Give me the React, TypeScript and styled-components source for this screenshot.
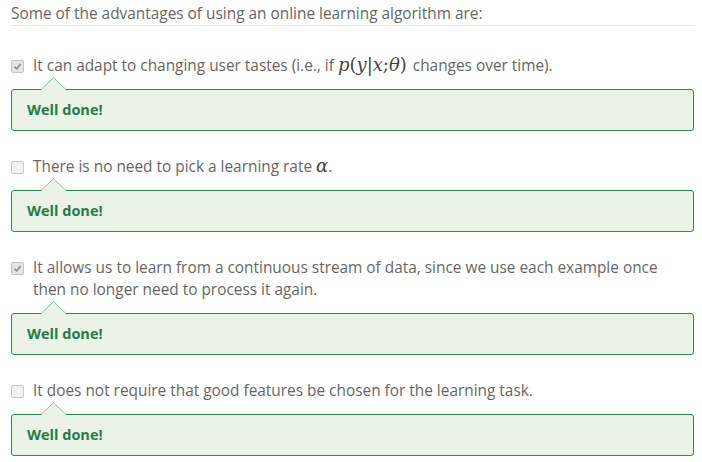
import React from "react";
import styled, { createGlobalStyle } from "styled-components";

const Global = createGlobalStyle`
  html, body { margin: 0; padding: 0; background: #fff; }
  body { font-family: "Open Sans", "Noto Sans", sans-serif; }
`;

const Page = styled.div`
  padding: 3px 8px 0 11px;
  width: 683px;
  color: #666;
  font-size: 15.4px;
  line-height: 22px;
`;

const Prompt = styled.div`
  border-bottom: 1px solid #e6e6e6;
  margin-bottom: 29px;
`;

const List = styled.div`
  display: flex;
  flex-direction: column;
  gap: 25px;
`;

const Item = styled.div`
  display: flex;
  flex-direction: column;
`;

const OptionRow = styled.label`
  display: flex;
  align-items: flex-start;
`;

const Box = styled.span<{ $checked: boolean }>`
  flex: none;
  width: 11px;
  height: 11px;
  margin: 5px 9px 0 0;
  border: 1px solid ${(p) => (p.$checked ? "#c4c4c4" : "#c8c8c8")};
  border-radius: 2px;
  background: ${(p) => (p.$checked ? "#e4e4e4" : "#f2f2f2")};
  display: flex;
  align-items: center;
  justify-content: center;
`;

const OptionText = styled.span`
  flex: 1;
`;

const Math = styled.span<{ $trail?: boolean }>`
  font-family: "DejaVu Serif", "Liberation Serif", serif;
  font-size: 18px;
  line-height: 0;
  color: #444;
  padding: 0 ${(p) => (p.$trail ? "2px" : "0")} 0 4px;
`;

const MI = styled.i`
  font-style: italic;
`;

const Feedback = styled.div`
  position: relative;
  margin-top: 12px;
  border: 1px solid #2b8a55;
  border-radius: 3px;
  background: #eaf3e6;
  padding: 9px 15px 9px;
  color: #1e7d4a;
  font-weight: 700;
  font-size: 14.5px;
`;

const Pointer = styled.svg`
  position: absolute;
  left: 28px;
  top: -13px;
`;

const Check = () => (
  <svg width="9" height="9" viewBox="0 0 9 9">
    <path d="M1.5 4.8 L3.6 6.9 L7.6 2" fill="none" stroke="#8a8a8a" strokeWidth="1.6" />
  </svg>
);

const Well = () => (
  <Feedback>
    <Pointer width="27" height="14" viewBox="0 0 27 14">
      <polygon points="0.5,13.5 13.5,0.7 26.5,13.5" fill="#eaf3e6" />
      <polyline points="0.5,13 13.5,0.7 26.5,13" fill="none" stroke="#7ccb9d" strokeWidth="1" />
    </Pointer>
    Well done!
  </Feedback>
);

const options: { checked: boolean; text: React.ReactNode }[] = [
  {
    checked: true,
    text: (
      <>
        It can adapt to changing user tastes (i.e., if
        <Math $trail>
          <MI>p</MI>(<MI>y</MI>|<MI>x</MI>;<MI>θ</MI>)
        </Math>{" "}
        changes over time).
      </>
    ),
  },
  {
    checked: false,
    text: (
      <>
        There is no need to pick a learning rate
        <Math>
          <MI>α</MI>
        </Math>
        .
      </>
    ),
  },
  {
    checked: true,
    text: (
      <>
        It allows us to learn from a continuous stream of data, since we use each example once then no longer
        need to process it again.
      </>
    ),
  },
  {
    checked: false,
    text: <>It does not require that good features be chosen for the learning task.</>,
  },
];

export default function App() {
  return (
    <>
      <Global />
      <Page>
        <Prompt>Some of the advantages of using an online learning algorithm are:</Prompt>
        <List>
          {options.map((o, i) => (
            <Item key={i}>
              <OptionRow>
                <Box $checked={o.checked}>{o.checked && <Check />}</Box>
                <OptionText>{o.text}</OptionText>
              </OptionRow>
              <Well />
            </Item>
          ))}
        </List>
      </Page>
    </>
  );
}
